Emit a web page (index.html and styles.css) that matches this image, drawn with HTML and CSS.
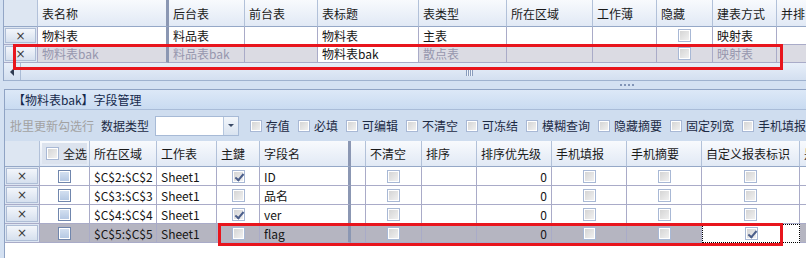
FILE: index.html
```html
<!DOCTYPE html>
<html lang="zh-CN">
<head>
  <meta charset="UTF-8" />
  <title>字段管理</title>
  <link rel="stylesheet" href="styles.css">
</head>
<body>
  <div class="table-panel">
    <div class="top-grid">
      <div class="row head">
        <div class="cell ind"></div>
        <div class="cell frozen">表名称</div>
        <div class="cell">后台表</div>
        <div class="cell">前台表</div>
        <div class="cell">表标题</div>
        <div class="cell">表类型</div>
        <div class="cell">所在区域</div>
        <div class="cell">工作薄</div>
        <div class="cell">隐藏</div>
        <div class="cell">建表方式</div>
        <div class="cell">并排</div>
      </div>
      <div class="row">
        <div class="cell ind"><span class="del">×</span></div>
        <div class="cell frozen">物料表</div>
        <div class="cell">料品表</div>
        <div class="cell"></div>
        <div class="cell">物料表</div>
        <div class="cell">主表</div>
        <div class="cell"></div>
        <div class="cell"></div>
        <div class="cell center"><span class="cb"></span></div>
        <div class="cell">映射表</div>
        <div class="cell"></div>
      </div>
      <div class="row dim">
        <div class="cell ind"><span class="del">×</span></div>
        <div class="cell frozen">物料表bak</div>
        <div class="cell">料品表bak</div>
        <div class="cell"></div>
        <div class="cell editing">物料表bak</div>
        <div class="cell">散点表</div>
        <div class="cell"></div>
        <div class="cell"></div>
        <div class="cell center"><span class="cb"></span></div>
        <div class="cell">映射表</div>
        <div class="cell"></div>
      </div>
    </div>
    <div class="hscroll">
      <div class="scroll-btn"><span class="arrow-left"></span></div>
      <div class="thumb"><span class="grip"></span></div>
    </div>
  </div>

  <div class="splitter"><span class="dots"></span></div>

  <div class="field-panel">
    <div class="panel-title">【物料表bak】字段管理</div>
    <div class="toolbar">
      <span class="disabled">批里更新勾选行</span>
      <span class="label">数据类型</span>
      <div class="combo"><span class="combo-btn"></span></div>
      <div class="checks">
        <label class="check"><span class="cb small"></span>存值</label>
        <label class="check"><span class="cb small"></span>必填</label>
        <label class="check"><span class="cb small"></span>可编辑</label>
        <label class="check"><span class="cb small"></span>不清空</label>
        <label class="check"><span class="cb small"></span>可冻结</label>
        <label class="check"><span class="cb small"></span>模糊查询</label>
        <label class="check"><span class="cb small"></span>隐藏摘要</label>
        <label class="check"><span class="cb small"></span>固定列宽</label>
        <label class="check"><span class="cb small"></span>手机填报</label>
      </div>
    </div>

    <div class="field-grid">
      <div class="row head">
        <div class="cell ind"></div>
        <div class="cell all"><span class="all-box"><span class="cb"></span>全选</span></div>
        <div class="cell">所在区域</div>
        <div class="cell">工作表</div>
        <div class="cell">主鍵</div>
        <div class="cell frozen">字段名</div>
        <div class="cell"></div>
        <div class="cell">不清空</div>
        <div class="cell">排序</div>
        <div class="cell">排序优先级</div>
        <div class="cell">手机填报</div>
        <div class="cell">手机摘要</div>
        <div class="cell">自定义报表标识</div>
        <div class="cell">是否</div>
      </div>
      <div class="row">
        <div class="cell ind"><span class="del">×</span></div>
        <div class="cell center"><span class="cb sel"></span></div>
        <div class="cell">$C$2:$C$2</div>
        <div class="cell">Sheet1</div>
        <div class="cell center"><span class="cb on"></span></div>
        <div class="cell frozen">ID</div>
        <div class="cell"></div>
        <div class="cell center"><span class="cb"></span></div>
        <div class="cell"></div>
        <div class="cell num">0</div>
        <div class="cell center"><span class="cb"></span></div>
        <div class="cell center"><span class="cb"></span></div>
        <div class="cell center"><span class="cb"></span></div>
        <div class="cell"></div>
      </div>
      <div class="row">
        <div class="cell ind"><span class="del">×</span></div>
        <div class="cell center"><span class="cb sel"></span></div>
        <div class="cell">$C$3:$C$3</div>
        <div class="cell">Sheet1</div>
        <div class="cell center"><span class="cb"></span></div>
        <div class="cell frozen">品名</div>
        <div class="cell"></div>
        <div class="cell center"><span class="cb"></span></div>
        <div class="cell"></div>
        <div class="cell num">0</div>
        <div class="cell center"><span class="cb"></span></div>
        <div class="cell center"><span class="cb"></span></div>
        <div class="cell center"><span class="cb"></span></div>
        <div class="cell"></div>
      </div>
      <div class="row">
        <div class="cell ind"><span class="del">×</span></div>
        <div class="cell center"><span class="cb sel"></span></div>
        <div class="cell">$C$4:$C$4</div>
        <div class="cell">Sheet1</div>
        <div class="cell center"><span class="cb on"></span></div>
        <div class="cell frozen">ver</div>
        <div class="cell"></div>
        <div class="cell center"><span class="cb"></span></div>
        <div class="cell"></div>
        <div class="cell num">0</div>
        <div class="cell center"><span class="cb"></span></div>
        <div class="cell center"><span class="cb"></span></div>
        <div class="cell center"><span class="cb"></span></div>
        <div class="cell"></div>
      </div>
      <div class="row current">
        <div class="cell ind"><span class="del">×</span></div>
        <div class="cell center"><span class="cb sel"></span></div>
        <div class="cell">$C$5:$C$5</div>
        <div class="cell">Sheet1</div>
        <div class="cell center"><span class="cb"></span></div>
        <div class="cell frozen">flag</div>
        <div class="cell"></div>
        <div class="cell center"><span class="cb"></span></div>
        <div class="cell"></div>
        <div class="cell num">0</div>
        <div class="cell center"><span class="cb"></span></div>
        <div class="cell center"><span class="cb"></span></div>
        <div class="cell center focus"><span class="cb on"></span></div>
        <div class="cell"></div>
      </div>
    </div>
  </div>

  <!-- пометки -->
  <div class="mark mark-top"></div>
  <div class="mark mark-bottom"></div>
</body>
</html>
```

FILE: styles.css
```css
* {
  margin: 0;
  padding: 0;
  box-sizing: border-box;
}

body {
  font-family: "Noto Sans CJK SC", sans-serif;
  font-size: 12px;
  color: #151515;
  background: #d4e1f2;
  width: 806px;
  height: 258px;
  overflow: hidden;
  position: relative;
}

/* сетки */
.row {
  display: grid;
}

.cell {
  display: flex;
  align-items: center;
  padding-left: 4px;
  border-right: 1px solid #a9abc8;
  border-bottom: 1px solid #a9abc8;
  white-space: nowrap;
  overflow: hidden;
}

.head .cell {
  background: linear-gradient(#f8fafd, #e1e9f5);
  border-right-color: #b2c1d9;
  border-bottom-color: #95a8c7;
  color: #1a1a1a;
}

.cell.frozen {
  border-right: 3px solid #8b97b3;
}

.cell.center {
  justify-content: center;
  padding: 0;
}

.cell.num {
  justify-content: flex-end;
  padding: 0 4px 0 0;
}

.cell.ind {
  padding: 1px 1px 1px 1px;
  background: #dde6f2;
}

.del {
  flex: 1;
  height: 100%;
  display: flex;
  align-items: center;
  justify-content: center;
  border: 1px solid #aebdd6;
  background: linear-gradient(#f3f6fb, #d6e0ee);
  color: #3a3a3a;
  font-family: "DejaVu Sans", sans-serif;
  font-size: 12px;
}

/* верхняя таблица */
.table-panel {
  margin-left: 3px;
  border-left: 1px solid #93a6c6;
  background: #fff;
  overflow: hidden;
}

.top-grid .row {
  grid-template-columns: 34px 131px 76px 73px 101px 88px 86px 64px 56px 64px 60px;
  height: 18px;
}

.top-grid .row.head {
  height: 27px;
}

.row.dim {
  background: #dbdbe3;
  color: #9797ae;
}

.row.dim .cell.editing {
  background: #fff;
  color: #151515;
}

.hscroll {
  height: 18px;
  display: flex;
  background: linear-gradient(#e8eff9, #d3dff0);
  border-bottom: 1px solid #9fb2cf;
  overflow: hidden;
}

.scroll-btn {
  width: 17px;
  flex-shrink: 0;
  display: flex;
  align-items: center;
  justify-content: center;
  border-right: 1px solid #aabbd5;
}

.arrow-left {
  width: 0;
  height: 0;
  border-top: 4px solid transparent;
  border-bottom: 4px solid transparent;
  border-right: 4px solid #2f3b52;
}

.thumb {
  width: 896px;
  flex-shrink: 0;
  display: flex;
  align-items: center;
  justify-content: center;
}

.grip {
  width: 7px;
  height: 8px;
  background: repeating-linear-gradient(90deg, #8a9cbc 0 1px, #eef3fa 1px 2px);
}

.splitter {
  height: 8px;
  display: flex;
  align-items: center;
  padding-left: 620px;
}

.dots {
  width: 14px;
  height: 2px;
  background: repeating-linear-gradient(90deg, #8295b7 0 2px, transparent 2px 4px);
}

/* нижняя панель */
.field-panel {
  margin-left: 4px;
  height: 169px;
  border-left: 1px solid #8fa3c4;
  border-top: 1px solid #8fa3c4;
  background: #fff;
  overflow: hidden;
}

.panel-title {
  height: 20px;
  padding-left: 8px;
  display: flex;
  align-items: center;
  background: linear-gradient(#dce8f7, #c9dbf1);
  border-bottom: 1px solid #a9bcd8;
  color: #15294b;
}

.toolbar {
  height: 31px;
  display: flex;
  align-items: center;
  padding-left: 5px;
  background: #cfddef;
  color: #1d2a44;
  white-space: nowrap;
}

.disabled {
  color: #a2a2a2;
}

.label {
  margin-left: 7px;
}

.combo {
  margin-left: 6px;
  width: 100px;
  height: 20px;
  display: flex;
  justify-content: flex-end;
  background: #fff;
  border: 1px solid #a7bad6;
}

.combo-btn {
  width: 15px;
  border-left: 1px solid #b5c6de;
  background: linear-gradient(#f2f6fb, #d9e3f0);
  display: flex;
  align-items: center;
  justify-content: center;
}

.combo-btn::before {
  content: "";
  border-left: 3px solid transparent;
  border-right: 3px solid transparent;
  border-top: 3px solid #3b4a66;
}

.checks {
  margin-left: 11px;
  display: flex;
  gap: 8px;
}

.check {
  display: flex;
  align-items: center;
  gap: 4px;
}

.cb {
  width: 13px;
  height: 13px;
  flex-shrink: 0;
  position: relative;
  border: 1px solid #a8b8d5;
  background: linear-gradient(135deg, #d2d2d2, #f3f3f3);
  box-shadow: inset 0 0 0 1px #fff;
}

.cb.small {
  width: 12px;
  height: 12px;
}

.cb.on::after {
  content: "";
  position: absolute;
  left: 4px;
  top: 1px;
  width: 3px;
  height: 7px;
  border: solid #4b5e8a;
  border-width: 0 2px 2px 0;
  transform: rotate(40deg);
}

.cb.sel {
  border-color: #7086ad;
  background: linear-gradient(#d6e2f2, #b2c6e2);
}

.field-grid .row {
  grid-template-columns: 35px 50px 67px 60px 43px 91px 15px 56px 55px 75px 75px 75px 98px 60px;
  height: 19px;
}

.field-grid .row.head {
  height: 26px;
}

.cell.all {
  padding: 2px;
}

.all-box {
  flex: 1;
  height: 100%;
  display: flex;
  align-items: center;
  gap: 4px;
  padding-left: 4px;
  background: #dce3ee;
}

.row.current {
  background: #b5b5c1;
}

.cell.focus {
  background: #fff;
  border: 1px dotted #000;
}

/* красные рамки */
.mark {
  position: absolute;
  border: 3px solid #e8151d;
}

.mark-top {
  left: 13px;
  top: 44px;
  width: 770px;
  height: 26px;
}

.mark-bottom {
  left: 218px;
  top: 223px;
  width: 565px;
  height: 23px;
}
```
